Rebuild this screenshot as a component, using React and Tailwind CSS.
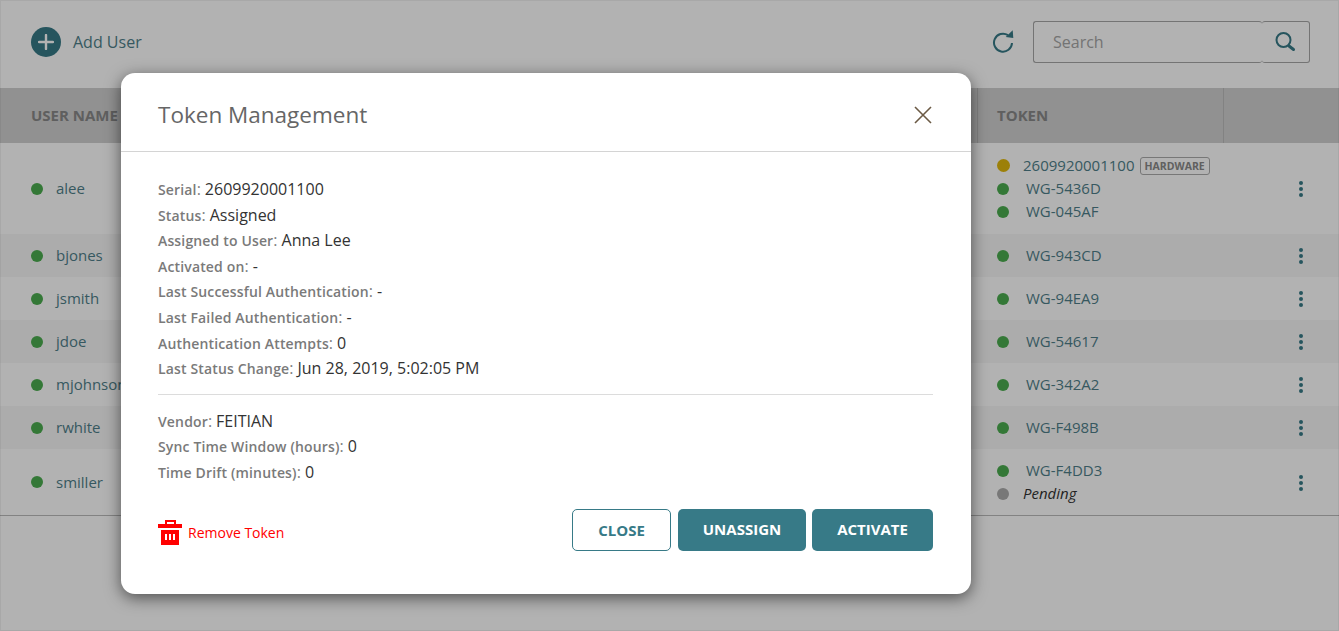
import React from 'react';

const users = [
  { name: 'alee', tall: 'h-[91px]', tokens: [['hw', '2609920001100'], ['ok', 'WG-5436D'], ['ok', 'WG-045AF']] },
  { name: 'bjones', tokens: [['ok', 'WG-943CD']], alt: true },
  { name: 'jsmith', tokens: [['ok', 'WG-94EA9']] },
  { name: 'jdoe', tokens: [['ok', 'WG-54617']], alt: true },
  { name: 'mjohnson', tokens: [['ok', 'WG-342A2']] },
  { name: 'rwhite', tokens: [['ok', 'WG-F498B']], alt: true },
  { name: 'smiller', tall: 'h-[66px]', tokens: [['ok', 'WG-F4DD3'], ['pending', 'Pending']] },
];

const details = [
  ['Serial', '2609920001100'],
  ['Status', 'Assigned'],
  ['Assigned to User', 'Anna Lee'],
  ['Activated on', '-'],
  ['Last Successful Authentication', '-'],
  ['Last Failed Authentication', '-'],
  ['Authentication Attempts', '0'],
  ['Last Status Change', 'Jun 28, 2019, 5:02:05 PM'],
];

const vendorDetails = [
  ['Vendor', 'FEITIAN'],
  ['Sync Time Window (hours)', '0'],
  ['Time Drift (minutes)', '0'],
];

function Kebab() {
  return (
    <div className="flex flex-col items-center gap-[2px] pt-[1px]">
      <span className="w-[4px] h-[4px] rounded-full bg-[#377a87]"></span>
      <span className="w-[4px] h-[4px] rounded-full bg-[#377a87]"></span>
      <span className="w-[4px] h-[4px] rounded-full bg-[#377a87]"></span>
    </div>
  );
}

function TokenLine({ kind, label }) {
  if (kind === 'hw') {
    return (
      <div className="flex items-center h-[23px]">
        <span className="w-[13px] h-[13px] rounded-full bg-[#e0b80d]"></span>
        <span className="ml-[13px] text-[#4f7f8a]">{label}</span>
        <span className="ml-[5px] border border-[#ababab] rounded-[3px] px-[4px] h-[18px] leading-[16px] text-[10.5px] font-bold text-[#8a8a8a]">HARDWARE</span>
      </div>
    );
  }
  if (kind === 'pending') {
    return (
      <div className="flex items-center h-[23px]">
        <span className="w-[12px] h-[12px] rounded-full bg-[#acacac]"></span>
        <span className="ml-[14px] italic text-[#333]">{label}</span>
      </div>
    );
  }
  return (
    <div className="flex items-center h-[23px]">
      <span className="w-[12px] h-[12px] rounded-full bg-[#4bad4f]"></span>
      <span className="ml-[17px] text-[#4f7f8a]">{label}</span>
    </div>
  );
}

function UserRow({ user }) {
  return (
    <div className={`flex items-center ${user.tall || 'h-[43px]'} ${user.alt ? 'bg-[#f7f7f7]' : ''}`}>
      <div className="flex-1 flex items-center pl-[31px]">
        <span className="w-[12px] h-[12px] rounded-full bg-[#4bad4f]"></span>
        <span className="ml-[13px] text-[#4f7f8a]">{user.name}</span>
      </div>
      <div className="w-[362px] pl-[20px] flex items-center">
        <div className="w-[302px]">
          {user.tokens.map(([kind, label]) => (
            <TokenLine key={label} kind={kind} label={label} />
          ))}
        </div>
        <Kebab />
      </div>
    </div>
  );
}

function DetailRows({ rows }) {
  return rows.map(([label, value]) => (
    <div key={label} className="h-[25.6px] leading-[25.6px] flex items-baseline text-[16px] text-[#333]">
      <span className="text-[14px] font-semibold tracking-[0.15px] text-[#7a7a7a]">{label}</span>
      <span className="text-[#808080]">:</span>
      <span className="ml-[4px]">{value}</span>
    </div>
  ));
}

export default function App() {
  return (
    <div className="relative h-[631px] overflow-hidden bg-white text-[15px] font-['Open_Sans',sans-serif]">
      <div className="flex items-center h-[88px] pb-[4px] pl-[31px] pr-[29px]">
        <span className="w-[30px] h-[30px] rounded-full bg-[#377a87] flex items-center justify-center">
          <svg width="16" height="16" viewBox="0 0 16 16">
            <path d="M8 1v14M1 8h14" stroke="#fff" strokeWidth="2.4" strokeLinecap="round" />
          </svg>
        </span>
        <span className="ml-[12px] text-[16px] text-[#4f7f8a]">Add User</span>
        <div className="ml-auto mr-[17px]">
          <svg width="24" height="24" viewBox="0 0 24 24" fill="none" className="block">
            <path d="M16 5.2A9 9 0 1 0 20 13" stroke="#377a87" strokeWidth="2" />
            <path d="M13.7 7l7.6 1-.6-7.7z" fill="#377a87" />
          </svg>
        </div>
        <div className="flex w-[277px] h-[42px]">
          <div className="flex-1 pl-[19px] flex items-center text-[16px] text-[#a6a6a6] border border-r-0 border-[#a6a6a6] rounded-[3px]">Search</div>
          <div className="w-[48px] pl-[13px] flex items-center border border-l-0 border-[#a6a6a6] rounded-[3px]">
            <svg width="22" height="22" viewBox="0 0 22 22" fill="none" className="block">
              <circle cx="8.5" cy="9" r="7" stroke="#377a87" strokeWidth="2" />
              <path d="M14 15l4.5 3.5" stroke="#377a87" strokeWidth="3" strokeLinecap="round" />
            </svg>
          </div>
        </div>
      </div>

      <div className="flex h-[55px] bg-[#d0d0d0] text-[15px] font-bold text-[#888]">
        <div className="flex-1 pl-[31px] flex items-center">USER NAME</div>
        <div className="w-[246px] border-l border-[#bbb] pl-[19px] flex items-center">TOKEN</div>
        <div className="w-[116px] border-l border-[#bbb]"></div>
      </div>

      <div className="border-b border-[#bbb]">
        {users.map((user) => (
          <UserRow key={user.name} user={user} />
        ))}
      </div>

      {/* dim layer + modal */}
      <div className="absolute inset-0 bg-black/30 border border-black/5 pl-[120px] pt-[72px]">
        <div className="w-[850px] h-[521px] bg-white rounded-[14px] shadow-[0_4px_16px_rgba(0,0,0,0.55)] flex flex-col">
          <div className="h-[79px] shrink-0 border-b border-[#d4d4d4] pt-[6px] pl-[37px] pr-[39px] flex items-center justify-between">
            <h2 className="text-[22.5px] text-[#666]">Token Management</h2>
            <svg width="18" height="18" viewBox="0 0 18 18">
              <path d="M1 1l16 16M17 1L1 17" stroke="#6b5a45" strokeWidth="1.6" />
            </svg>
          </div>
          <div className="flex-1 pl-[37px] pr-[38px] pt-[25px]">
            <div className="pb-[12px] border-b border-[#dcdcdc]">
              <DetailRows rows={details} />
            </div>
            <div className="pt-[14px]">
              <DetailRows rows={vendorDetails} />
            </div>
            <div className="flex mt-[23px]">
              <div className="flex items-center self-end mb-[6px]">
                <svg width="24" height="25" viewBox="0 0 24 25" className="block">
                  <path d="M7 4V0h11v4h-2V2H9v2zM0 4h24v4H0zM3 10h18v15H3zM7 14v6h2v-6zM11 14v6h2v-6zM15 14v6h2v-6z" fill="#f00" fillRule="evenodd" />
                </svg>
                <span className="ml-[6px] text-[14px] text-[#f00]">Remove Token</span>
              </div>
              <button className="ml-auto w-[99px] h-[42px] pt-[1px] border border-[#377a87] rounded-[5px] text-[15px] font-bold text-[#377a87]">CLOSE</button>
              <button className="ml-[7px] w-[128px] h-[42px] bg-[#377a87] rounded-[5px] text-[15px] font-bold text-white">UNASSIGN</button>
              <button className="ml-[6px] w-[121px] h-[42px] bg-[#377a87] rounded-[5px] text-[15px] font-bold text-white">ACTIVATE</button>
            </div>
          </div>
        </div>
      </div>
    </div>
  );
}
